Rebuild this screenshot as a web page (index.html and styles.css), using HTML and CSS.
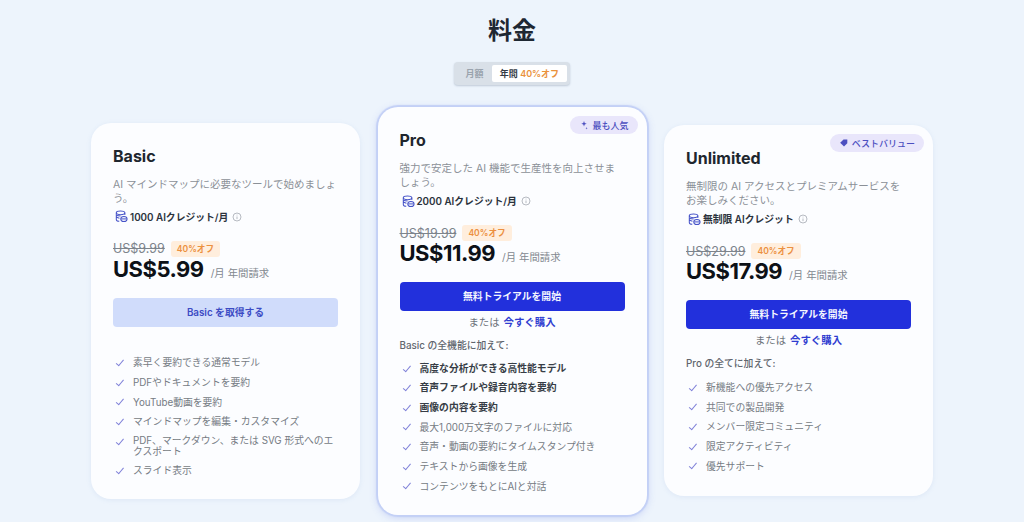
FILE: index.html
```html
<!DOCTYPE html>
<html lang="ja">
<head>
<meta charset="utf-8">
<title>料金</title>
<link rel="stylesheet" href="styles.css">
</head>
<body>
<main class="page">
  <h1 class="title">料金</h1>
  <div class="toggle">
    <span class="toggle-off">月額</span>
    <span class="toggle-on">年間 <em>40%オフ</em></span>
  </div>
  <div class="plans">
    <section class="card">
      <h2 class="name">Basic</h2>
      <p class="desc">AI マインドマップに必要なツールで始めましょう。</p>
      <div class="credit">
        <svg class="coin" viewBox="0 0 14 14"><ellipse cx="6" cy="3" rx="4.6" ry="2"/><path d="M1.4 3v7.2c0 1 1.6 1.9 3.2 2M10.6 3v2.4M1.4 6.8c0 1 1.6 1.8 3.4 2M6 6.4c-1.6 0-3.2-.3-4-1"/><ellipse cx="9.6" cy="9.7" rx="3.4" ry="2.8"/><path d="M6.6 9.6h6"/></svg>
        <b>1000 AIクレジット/月</b>
        <svg class="info" viewBox="0 0 10 10"><circle cx="5" cy="5" r="4"/><path d="M5 4.5v2.6M5 2.7v.7"/></svg>
      </div>
      <div class="old-row"><s>US$9.99</s><span class="off">40%オフ</span></div>
      <div class="price-row"><strong>US$5.99</strong><span>/月 年間請求</span></div>
      <a class="btn btn-soft">Basic を取得する</a>
      <ul class="features first">
        <li><span>素早く要約できる通常モデル</span></li>
        <li><span>PDFやドキュメントを要約</span></li>
        <li><span>YouTube動画を要約</span></li>
        <li><span>マインドマップを編集・カスタマイズ</span></li>
        <li><span>PDF、マークダウン、または SVG 形式へのエクスポート</span></li>
        <li><span>スライド表示</span></li>
      </ul>
    </section>

    <section class="card card-pro">
      <span class="tag">
        <svg viewBox="0 0 10 10"><path class="spark" d="M5 1l.7 2 2 .7-2 .7L5 6.4l-.7-2-2-.7 2-.7zM7.6 7l.3.9.9.3-.9.3-.3.9-.3-.9-.9-.3.9-.3z"/></svg>
        最も人気
      </span>
      <h2 class="name">Pro</h2>
      <p class="desc">強力で安定した AI 機能で生産性を向上させましょう。</p>
      <div class="credit">
        <svg class="coin" viewBox="0 0 14 14"><ellipse cx="6" cy="3" rx="4.6" ry="2"/><path d="M1.4 3v7.2c0 1 1.6 1.9 3.2 2M10.6 3v2.4M1.4 6.8c0 1 1.6 1.8 3.4 2M6 6.4c-1.6 0-3.2-.3-4-1"/><ellipse cx="9.6" cy="9.7" rx="3.4" ry="2.8"/><path d="M6.6 9.6h6"/></svg>
        <b>2000 AIクレジット/月</b>
        <svg class="info" viewBox="0 0 10 10"><circle cx="5" cy="5" r="4"/><path d="M5 4.5v2.6M5 2.7v.7"/></svg>
      </div>
      <div class="old-row"><s>US$19.99</s><span class="off">40%オフ</span></div>
      <div class="price-row"><strong>US$11.99</strong><span>/月 年間請求</span></div>
      <a class="btn btn-solid">無料トライアルを開始</a>
      <p class="alt">または <a>今すぐ購入</a></p>
      <p class="lead">Basic の全機能に加えて:</p>
      <ul class="features">
        <li class="strong"><span>高度な分析ができる高性能モデル</span></li>
        <li class="strong"><span>音声ファイルや録音内容を要約</span></li>
        <li class="strong"><span>画像の内容を要約</span></li>
        <li><span>最大1,000万文字のファイルに対応</span></li>
        <li><span>音声・動画の要約にタイムスタンプ付き</span></li>
        <li><span>テキストから画像を生成</span></li>
        <li><span>コンテンツをもとにAIと対話</span></li>
      </ul>
    </section>

    <section class="card card-unl">
      <span class="tag">
        <svg viewBox="0 0 10 10"><path class="spark" d="M4.5 1.5h3.8v3.8L5 8.6 1.2 4.8z"/></svg>
        ベストバリュー
      </span>
      <h2 class="name">Unlimited</h2>
      <p class="desc">無制限の AI アクセスとプレミアムサービスを<br>お楽しみください。</p>
      <div class="credit">
        <svg class="coin" viewBox="0 0 14 14"><ellipse cx="6" cy="3" rx="4.6" ry="2"/><path d="M1.4 3v7.2c0 1 1.6 1.9 3.2 2M10.6 3v2.4M1.4 6.8c0 1 1.6 1.8 3.4 2M6 6.4c-1.6 0-3.2-.3-4-1"/><ellipse cx="9.6" cy="9.7" rx="3.4" ry="2.8"/><path d="M6.6 9.6h6"/></svg>
        <b>無制限 AIクレジット</b>
        <svg class="info" viewBox="0 0 10 10"><circle cx="5" cy="5" r="4"/><path d="M5 4.5v2.6M5 2.7v.7"/></svg>
      </div>
      <div class="old-row"><s>US$29.99</s><span class="off">40%オフ</span></div>
      <div class="price-row"><strong>US$17.99</strong><span>/月 年間請求</span></div>
      <a class="btn btn-solid">無料トライアルを開始</a>
      <p class="alt">または <a>今すぐ購入</a></p>
      <p class="lead">Pro の全てに加えて:</p>
      <ul class="features">
        <li><span>新機能への優先アクセス</span></li>
        <li><span>共同での製品開発</span></li>
        <li><span>メンバー限定コミュニティ</span></li>
        <li><span>限定アクティビティ</span></li>
        <li><span>優先サポート</span></li>
      </ul>
    </section>
  </div>
</main>
</body>
</html>
```
FILE: styles.css
```css
* { box-sizing: border-box; }
html, body { margin: 0; height: 100%; }
body {
  background: #edf4fc;
  color: #1c2430;
  font-family: Inter, "Noto Sans CJK JP", sans-serif;
  overflow: hidden;
}
.page {
  display: flex;
  flex-direction: column;
  align-items: center;
  padding-top: 13px;
}
.title {
  margin: 0;
  font-size: 24px;
  line-height: 36px;
  font-weight: 700;
  color: #1e2732;
}
.toggle {
  display: flex;
  align-items: center;
  margin-top: 13px;
  padding: 3px;
  height: 23px;
  width: 116px;
  border-radius: 4px;
  background: #d9e0e8;
  box-shadow: 0 1px 2px rgba(60, 80, 110, .25);
  font-size: 9px;
  font-weight: 600;
}
.toggle-off {
  width: 35px;
  text-align: center;
  color: #9aa3ad;
}
.toggle-on {
  flex: 1;
  height: 17px;
  line-height: 17px;
  text-align: center;
  background: #fff;
  border-radius: 2px;
  color: #333b46;
}
.toggle-on em { font-style: normal; color: #ea923c; }
.plans {
  display: flex;
  align-items: center;
  gap: 17.5px;
  margin-top: 22px;
}
.card {
  position: relative;
  width: 269px;
  padding: 22px 22px 22px;
  background: #fcfdff;
  border-radius: 20px;
  box-shadow: 0 1px 5px rgba(130, 160, 210, .14);
}
.card-pro {
  box-shadow: 0 0 1px 2px #c3d0f6, 0 2px 8px rgba(100, 120, 230, .3);
}
.card-unl { padding-bottom: 24px; }
.tag {
  position: absolute;
  top: 9px;
  right: 9px;
  display: flex;
  align-items: center;
  gap: 3px;
  height: 18px;
  padding: 0 9px;
  border-radius: 9px;
  background: #e9e6fb;
  color: #4c4fc0;
  font-size: 9px;
  font-weight: 500;
}
.tag svg { width: 10px; height: 10px; }
.spark { fill: #4c4fc0; }
.name {
  margin: 0;
  font-size: 16px;
  line-height: 23px;
  font-weight: 700;
  color: #20262e;
}
.desc {
  margin: 10px 0 0;
  font-size: 10.5px;
  line-height: 14px;
  color: #8b9097;
}
.credit {
  display: flex;
  align-items: center;
  margin-top: 3px;
  height: 16px;
  font-size: 9.8px;
  color: #2b323c;
}
.credit b { font-weight: 600; margin-left: 2px; }
.coin {
  width: 13px;
  height: 13px;
  margin-left: 2px;
  fill: none;
  stroke: #4653c8;
  stroke-width: 1.1;
}
.info {
  width: 10px;
  height: 10px;
  margin-left: 4px;
  fill: none;
  stroke: #a4aab2;
  stroke-width: .8;
}
.old-row {
  display: flex;
  align-items: center;
  gap: 6px;
  margin-top: 16px;
  height: 16px;
}
.old-row s {
  font-size: 12.5px;
  color: #7d848c;
}
.off {
  padding: 0 6px;
  height: 16px;
  line-height: 16px;
  border-radius: 3px;
  background: #ffeedd;
  color: #ec9040;
  font-size: 8.6px;
  font-weight: 600;
}
.price-row {
  display: flex;
  align-items: baseline;
  gap: 7px;
  height: 25px;
  line-height: 25px;
}
.price-row strong {
  font-size: 22px;
  font-weight: 700;
  letter-spacing: -.5px;
  color: #0d1117;
}
.price-row span {
  font-size: 10.4px;
  color: #82888f;
}
.btn {
  display: block;
  margin-top: 16px;
  height: 29px;
  line-height: 29px;
  border-radius: 4px;
  text-align: center;
  font-size: 9.8px;
  font-weight: 600;
}
.btn-soft { background: #d0dcfb; color: #3c4bc4; }
.btn-solid { background: #2230dc; color: #f4f6ff; }
.alt {
  margin: 4px 0 0;
  height: 16px;
  line-height: 16px;
  text-align: center;
  font-size: 10.4px;
  color: #6c727a;
}
.alt a { color: #2f3cd0; font-weight: 600; margin-left: 1px; }
.lead {
  margin: 7px 0 0;
  line-height: 16px;
  font-size: 9.8px;
  font-weight: 500;
  color: #5f656d;
}
.features {
  list-style: none;
  margin: 8px 0 0;
  padding: 0;
  display: flex;
  flex-direction: column;
  gap: 7px;
}
.card-unl .features { margin-top: 9px; }
.features.first { margin-top: 30px; }
.features li {
  position: relative;
  display: flex;
  align-items: center;
  min-height: 12.67px;
  padding-left: 20px;
  font-size: 9.8px;
  line-height: 11px;
  color: #757b83;
}
.features li::before {
  content: "";
  position: absolute;
  left: 5px;
  top: 1.5px;
  width: 3px;
  height: 6.5px;
  border-right: 1px solid #7f80d8;
  border-bottom: 1px solid #7f80d8;
  transform: rotate(40deg);
}
.features li.strong { color: #373d46; font-weight: 600; }
```
